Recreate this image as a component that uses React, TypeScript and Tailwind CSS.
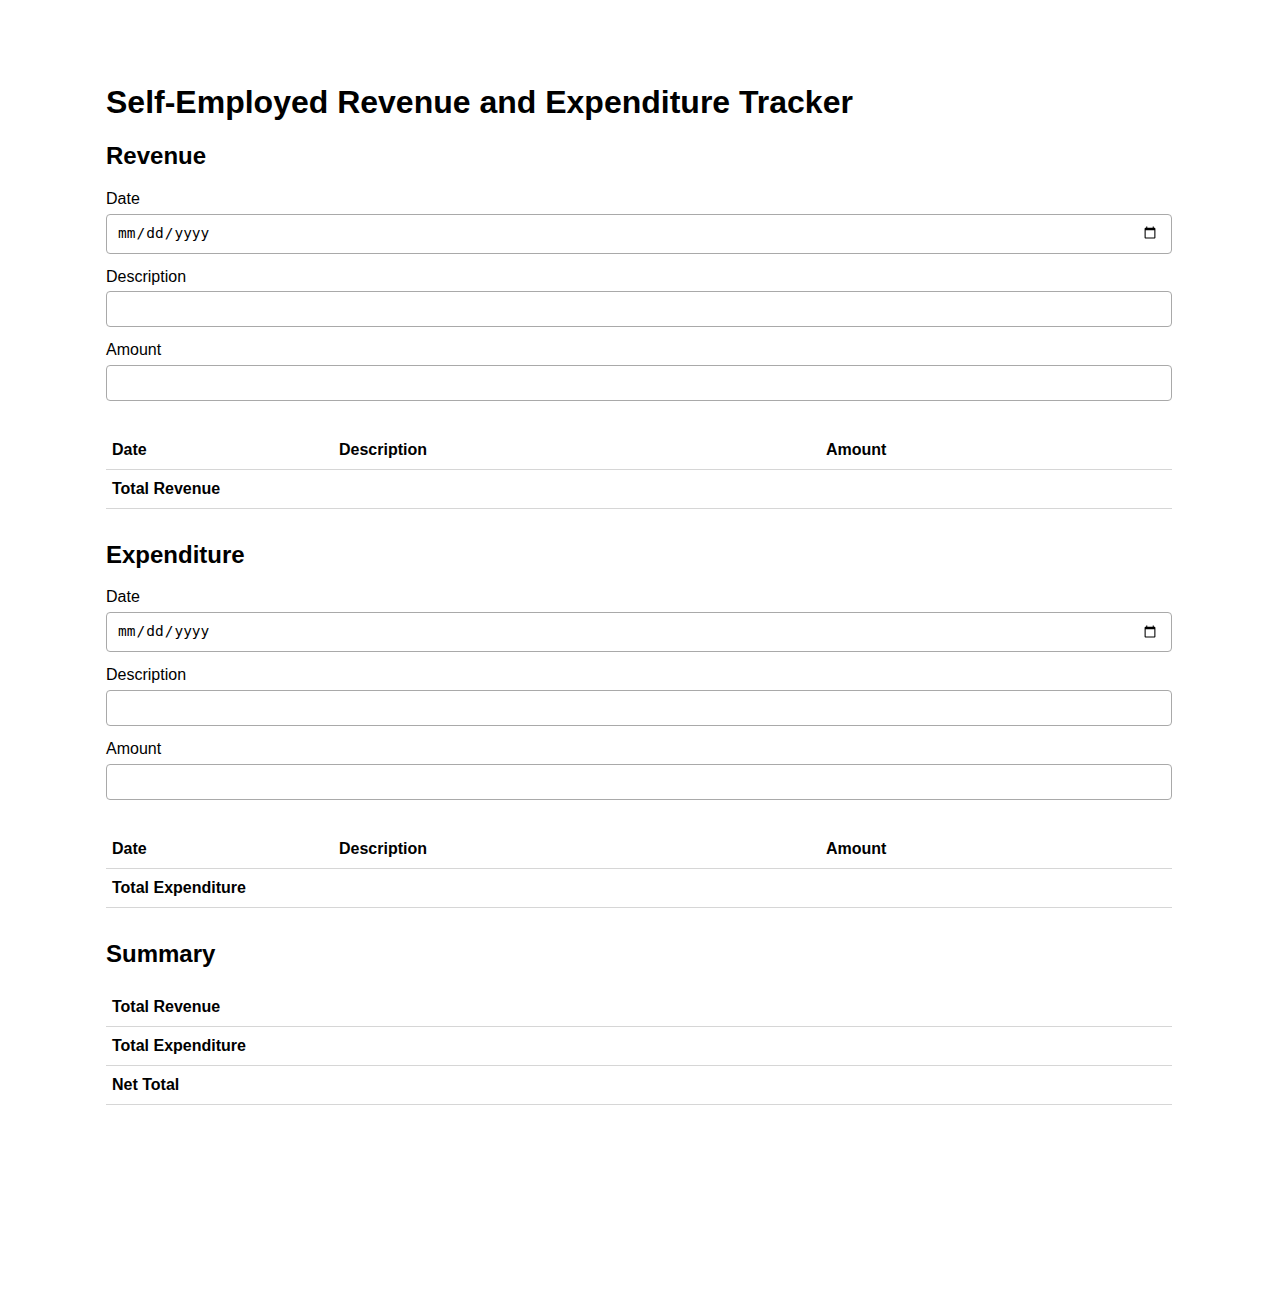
import { useState } from 'react'

type Entry = { date: string; description: string; amount: string }

const font = { fontFamily: '"Liberation Sans", Arial, sans-serif' }

function Field({ label, type, value, onChange }: { label: string; type: string; value: string; onChange: (v: string) => void }) {
  const isDate = type === 'date'
  return (
    <div className="mb-[14px]">
      <label className="block text-base leading-[18.4px] mb-[5.5px]">{label}</label>
      <input
        type={type}
        value={value}
        onChange={(e) => onChange(e.target.value)}
        className={
          isDate
            ? 'block w-full h-[40px] pl-[10px] pr-[12px] border border-[#a9a9a9] rounded-[4px] bg-white text-[14.5px] font-[DejaVu_Sans_Mono,monospace] text-black'
            : 'block w-full h-[36px] px-2 border border-[#a9a9a9] rounded-[4px] bg-white text-base text-black'
        }
      />
    </div>
  )
}

function EntryTable({ rows, totalLabel }: { rows: Entry[]; totalLabel: string }) {
  const total = rows.reduce((s, r) => s + (parseFloat(r.amount) || 0), 0)
  return (
    <table className="w-full table-fixed mt-[29.5px]">
      <thead>
        <tr className="border-b border-[#d6d6d6]">
          <th className="w-[227px] text-left font-bold px-1.5 py-2.5 leading-[18px]">Date</th>
          <th className="w-[487px] text-left font-bold px-1.5 py-2.5 leading-[18px]">Description</th>
          <th className="text-left font-bold px-1.5 py-2.5 leading-[18px]">Amount</th>
        </tr>
      </thead>
      <tbody>
        {rows.map((r, i) => (
          <tr key={i} className="border-b border-[#d6d6d6]">
            <td className="px-1.5 py-2.5 leading-[18px]">{r.date}</td>
            <td className="px-1.5 py-2.5 leading-[18px]">{r.description}</td>
            <td className="px-1.5 py-2.5 leading-[18px]">{r.amount}</td>
          </tr>
        ))}
        <tr className="border-b border-[#d6d6d6]">
          <td className="px-1.5 py-2.5 leading-[18px] font-bold">{totalLabel}</td>
          <td className="px-1.5 py-2.5 leading-[18px]"></td>
          <td className="px-1.5 py-2.5 leading-[18px] font-bold">{rows.length ? total.toFixed(2) : ''}</td>
        </tr>
      </tbody>
    </table>
  )
}

function Section({ title, totalLabel, rows, first }: { title: string; totalLabel: string; rows: Entry[]; first?: boolean }) {
  const [date, setDate] = useState('')
  const [description, setDescription] = useState('')
  const [amount, setAmount] = useState('')
  return (
    <section>
      <h2 className={`text-2xl font-bold leading-[27.6px] mb-5 ${first ? 'mt-[21.5px]' : 'mt-[32px]'}`}>{title}</h2>
      <Field label="Date" type="date" value={date} onChange={setDate} />
      <Field label="Description" type="text" value={description} onChange={setDescription} />
      <Field label="Amount" type="number" value={amount} onChange={setAmount} />
      <EntryTable rows={rows} totalLabel={totalLabel} />
    </section>
  )
}

export default function App() {
  const revenue: Entry[] = []
  const expenditure: Entry[] = []

  return (
    <div className="min-h-screen bg-white text-black" style={font}>
      <div className="max-w-[1066px] mx-auto pt-[83.5px] pb-20">
        <h1 className="text-[32px] font-bold leading-[37px]">Self-Employed Revenue and Expenditure Tracker</h1>

        <Section title="Revenue" totalLabel="Total Revenue" rows={revenue} first />
        <Section title="Expenditure" totalLabel="Total Expenditure" rows={expenditure} />

        {/* Summary */}
        <h2 className="text-2xl font-bold leading-[27.6px] mt-[32px] mb-[21px]">Summary</h2>
        <table className="w-full">
          <tbody>
            {['Total Revenue', 'Total Expenditure', 'Net Total'].map((label) => (
              <tr key={label} className="border-b border-[#d6d6d6]">
                <td className="w-[227px] px-1.5 py-2.5 leading-[18px] font-bold">{label}</td>
                <td className="px-1.5 py-2.5 leading-[18px]"></td>
              </tr>
            ))}
          </tbody>
        </table>
      </div>
    </div>
  )
}
